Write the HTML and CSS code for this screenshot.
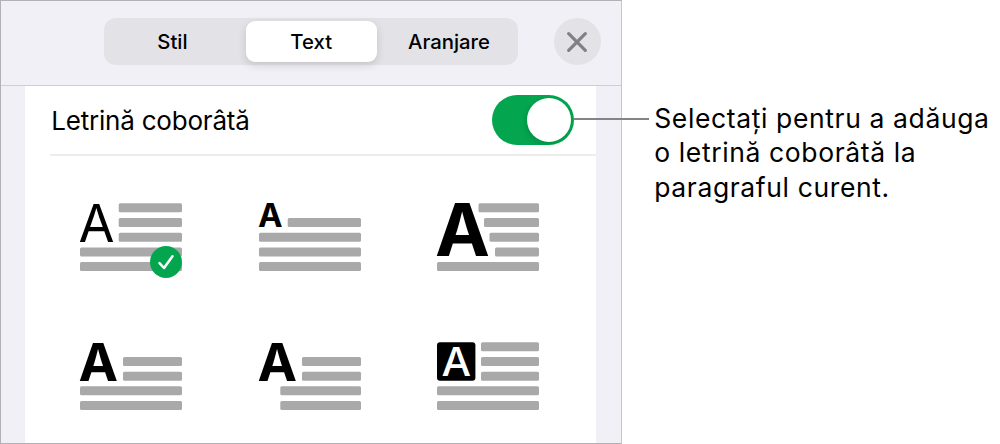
FILE: index.html
```html
<!DOCTYPE html>
<html lang="ro">
<head>
    <meta charset="UTF-8">
    <meta name="viewport" content="width=device-width, initial-scale=1.0">
    <title>Letrină coborâtă</title>
    <link rel="stylesheet" href="styles.css">
</head>
<body>

<div class="page">
    <div class="panel">
        <div class="toolbar">
            <div class="tabs">
                <button class="tab tab-style">Stil</button>
                <button class="tab tab-text active">Text</button>
                <button class="tab tab-arrange">Aranjare</button>
            </div>
            <button class="close" aria-label="Închide">
                <svg width="20" height="20" viewBox="0 0 20 20">
                    <path d="M1.7 1.7L18.3 18.3M18.3 1.7L1.7 18.3"/>
                </svg>
            </button>
        </div>

        <div class="card">
            <div class="switch-row">
                <span class="switch-label">Letrină coborâtă</span>
                <div class="switch"><div class="knob"></div></div>
            </div>

            <!-- Drop cap styles -->
            <div class="styles-grid">
                <div class="cap-style">
                    <svg width="104" height="70" viewBox="0 0 104 70">
                        <text class="thin" x="-1.5" y="38.5" font-size="52.6" textLength="36" lengthAdjust="spacingAndGlyphs">A</text>
                        <rect x="38.7" y="0.3" width="63.3" height="9" rx="1.5"/>
                        <rect x="38.7" y="15" width="63.3" height="9" rx="1.5"/>
                        <rect x="38.7" y="29.7" width="63.3" height="9" rx="1.5"/>
                        <rect x="0" y="44.5" width="102" height="9" rx="1.5"/>
                        <rect x="0" y="59" width="102" height="9" rx="1.5"/>
                    </svg>
                    <svg class="check" width="32" height="32" viewBox="0 0 32 32">
                        <circle cx="16" cy="16" r="16"/>
                        <path d="M9.5 17.2L14 22L22.5 10.2"/>
                    </svg>
                </div>
                <div class="cap-style">
                    <svg width="104" height="70" viewBox="0 0 104 70">
                        <text x="-0.9" y="23.7" font-size="32" textLength="24.6" lengthAdjust="spacingAndGlyphs">A</text>
                        <rect x="28.7" y="15" width="73.3" height="9" rx="1.5"/>
                        <rect x="0" y="29.7" width="102" height="9" rx="1.5"/>
                        <rect x="0" y="44.5" width="102" height="9" rx="1.5"/>
                        <rect x="0" y="59" width="102" height="9" rx="1.5"/>
                    </svg>
                </div>
                <div class="cap-style">
                    <svg width="104" height="70" viewBox="0 0 104 70">
                        <text x="-1.9" y="53.4" font-size="73" textLength="55" lengthAdjust="spacingAndGlyphs">A</text>
                        <rect x="41.5" y="0.3" width="60.5" height="9" rx="1.5"/>
                        <rect x="47" y="15" width="55" height="9" rx="1.5"/>
                        <rect x="52.5" y="29.7" width="49.5" height="9" rx="1.5"/>
                        <rect x="58" y="44.5" width="44" height="9" rx="1.5"/>
                        <rect x="0" y="59" width="102" height="9" rx="1.5"/>
                    </svg>
                </div>
                <div class="cap-style">
                    <svg width="104" height="70" viewBox="0 0 104 70">
                        <text x="-1.4" y="38.5" font-size="52.6" textLength="39.6" lengthAdjust="spacingAndGlyphs">A</text>
                        <rect x="43" y="15" width="59" height="9" rx="1.5"/>
                        <rect x="43" y="29.7" width="59" height="9" rx="1.5"/>
                        <rect x="0" y="44.2" width="102" height="9" rx="1.5"/>
                        <rect x="0" y="59" width="102" height="9" rx="1.5"/>
                    </svg>
                </div>
                <div class="cap-style">
                    <svg width="104" height="70" viewBox="0 0 104 70">
                        <text x="-1.4" y="38.5" font-size="52.6" textLength="39.6" lengthAdjust="spacingAndGlyphs">A</text>
                        <rect x="43" y="15" width="59" height="9" rx="1.5"/>
                        <rect x="43" y="29.7" width="59" height="9" rx="1.5"/>
                        <rect x="21.3" y="44.2" width="80.7" height="9" rx="1.5"/>
                        <rect x="21.3" y="59" width="80.7" height="9" rx="1.5"/>
                    </svg>
                </div>
                <div class="cap-style">
                    <svg width="104" height="70" viewBox="0 0 104 70">
                        <rect class="box" x="0" y="0.3" width="38.4" height="38.4" rx="3"/>
                        <text class="inverse" x="4.4" y="33.5" font-size="39.5" textLength="29.6" lengthAdjust="spacingAndGlyphs">A</text>
                        <rect x="44" y="0.3" width="58" height="9" rx="1.5"/>
                        <rect x="44" y="15" width="58" height="9" rx="1.5"/>
                        <rect x="44" y="29.7" width="58" height="9" rx="1.5"/>
                        <rect x="0" y="44.2" width="102" height="9" rx="1.5"/>
                        <rect x="0" y="59" width="102" height="9" rx="1.5"/>
                    </svg>
                </div>
            </div>
        </div>
    </div>

    <div class="callout">
        Selectați pentru a adăuga<br>
        o letrină coborâtă la<br>
        paragraful curent.
    </div>
    <div class="callout-line"></div>
</div>

</body>
</html>
```
FILE: styles.css
```css
* {
    box-sizing: border-box;
}

body {
    margin: 0;
    font-family: Inter, "Liberation Sans", sans-serif;
    color: #000;
    background-color: #fff;
    overflow: hidden;
}

button {
    border: none;
    padding: 0;
    font-family: inherit;
    color: inherit;
    background: none;
}

.page {
    position: relative;
    display: flex;
    height: 444px;
}

.panel {
    display: flex;
    flex-direction: column;
    width: 622.4px;
    border: 1px solid #b2b1b6;
    border-right-color: #c6c6cb;
    background-color: #f1f0f6;
}

/* Tabs and close button */
.toolbar {
    display: flex;
    flex-shrink: 0;
    height: 85px;
    padding: 17px 0 0 103px;
    border-bottom: 1px solid #cfcfd3;
}

.tabs {
    display: flex;
    width: 414.4px;
    height: 47px;
    padding: 3px;
    border-radius: 12px;
    background-color: #e3e2e7;
}

.tab {
    width: 139px;
    height: 41px;
    border-radius: 9px;
    font-size: 20.3px;
    font-weight: 500;
}

.tab-style {
    padding-right: 8px;
}

.tab-text {
    width: 131px;
}

.tab-arrange {
    padding-left: 6px;
}

.tab.active {
    background-color: #fff;
    box-shadow: 0 3px 8px rgba(0, 0, 0, 0.14);
}

.close {
    display: flex;
    justify-content: center;
    align-items: center;
    width: 47px;
    height: 47px;
    margin-left: 35.5px;
    border-radius: 50%;
    background-color: #e3e2e7;
}

.close svg {
    margin-right: 1px;
}

.close path {
    fill: none;
    stroke: #808085;
    stroke-width: 3.2;
    stroke-linecap: round;
}

.card {
    flex: 1;
    width: 571px;
    margin-left: 24.4px;
    background-color: #fff;
}

.switch-row {
    display: flex;
    justify-content: space-between;
    align-items: center;
    height: 70px;
    margin-left: 25px;
    padding-right: 22px;
    border-bottom: 2px solid #ededee;
}

.switch-label {
    padding-left: 0.8px;
    font-size: 26px;
    letter-spacing: -0.2px;
}

.switch {
    width: 82px;
    height: 50px;
    padding: 3px 3px 3px 35px;
    border-radius: 25px;
    background-color: #03a64f;
}

.knob {
    width: 44px;
    height: 44px;
    border-radius: 50%;
    background-color: #fff;
    box-shadow: -1px 2px 6px rgba(0, 0, 0, 0.15);
}

/* Drop cap previews */
.styles-grid {
    display: grid;
    grid-template-columns: 179px 178px 178px;
    grid-template-rows: 139px auto;
    padding: 47px 0 0 54.4px;
}

.cap-style {
    position: relative;
}

.cap-style > svg {
    display: block;
    overflow: visible;
}

.cap-style text {
    font-weight: 700;
}

.cap-style .thin {
    font-weight: 400;
}

.cap-style .inverse {
    font-weight: 500;
    fill: #fff;
}

.cap-style rect {
    fill: #a9a9a9;
}

.cap-style .box {
    fill: #000;
}

/* Selected style badge */
.cap-style .check {
    position: absolute;
    top: 43.3px;
    left: 70.5px;
}

.check circle {
    fill: #03a64f;
}

.check path {
    fill: none;
    stroke: #fff;
    stroke-width: 2.5;
    stroke-linecap: round;
    stroke-linejoin: round;
}

/* Callout text and its leader line */
.callout {
    padding: 100.6px 0 0 31.8px;
    font-size: 26.5px;
    line-height: 34.7px;
    letter-spacing: 0.62px;
    white-space: nowrap;
}

.callout-line {
    position: absolute;
    top: 118px;
    left: 574px;
    width: 75px;
    height: 2px;
    background-color: #848484;
}
```
